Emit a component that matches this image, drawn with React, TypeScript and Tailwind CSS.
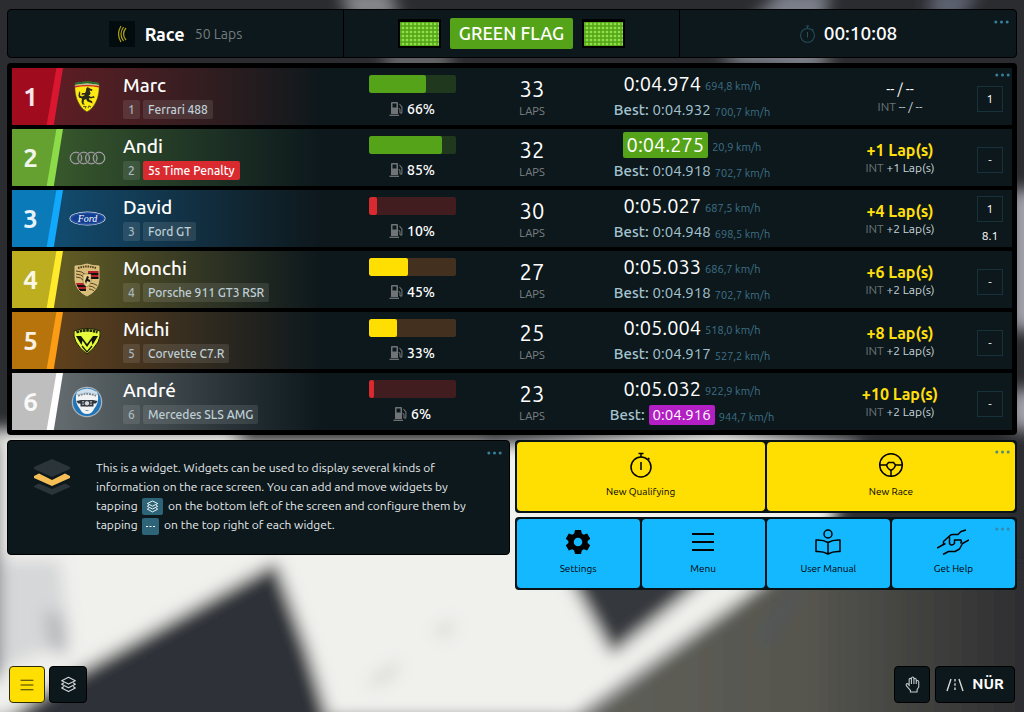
import React from 'react';
import clsx from 'clsx';

interface Driver {
  pos: number;
  name: string;
  tag: string;
  penalty?: boolean;
  fuel: number;
  laps: number;
  last: string;
  lastSpeed: string;
  lastFlag?: boolean;
  best: string;
  bestSpeed: string;
  bestFlag?: boolean;
  gap: string;
  int: string;
  box: string;
  boxTime?: string;
  row: string;
  rank: string;
  stripe: string;
  logo: React.ReactNode;
}

const Ferrari = () => (
  <svg viewBox="0 0 26 32" className="h-8 w-[26px]">
    <path d="M1 2Q13-1 25 2Q26 13 22 21Q19 28 13 31Q7 28 4 21Q0 13 1 2Z" fill="#fdea14" stroke="#39361b" strokeWidth=".6" />
    <path d="M1 2Q13-1 25 2V4Q13 1 1 4Z" fill="#236b35" />
    <path d="M1 4Q13 1 25 4V5Q13 3 1 5Z" fill="#b9b9a0" />
    <path d="M1 5Q13 3 25 5V6.500Q13 4 1 6.500Z" fill="#d2232a" />
    <path d="M13.500 6L16 7.500L18.500 8.500L18 10L15.500 9.500L16.500 12Q16.500 14 14.500 14.500L17 16L20 15L20.500 17L18.500 16.800L17.500 17.500L15 17L15.500 19L18 20L18.500 22.500L16.500 21.500L13.500 20.500L12 18L10 19L9.500 22L11 23.500L8.500 23.500L7.500 21L8 18L7 17Q4.500 17.500 4.500 14.500Q4.200 12 6 10Q6.500 12.500 6 14.500L8 15.500L11 14L9.500 13.500L7.500 14L8 12L11 12L12 10Q11.500 7.500 13.500 6Z" fill="#2c2a1a" />
    <path d="M9 25.500h3l-1 2M14 27l1-2 2 1" fill="none" stroke="#6b6216" strokeWidth="1.100" />
  </svg>
);

const Audi = () => (
  <svg viewBox="0 0 37 14" className="h-[14px] w-[37px]" fill="none">
    {[7, 14.7, 22.3, 30].map((cx) => (
      <g key={cx}>
        <circle cx={cx} cy="7" r="5.6" stroke="#595f58" strokeWidth="1.9" />
        <circle cx={cx} cy="7" r="5.8" stroke="#b4b8b5" strokeWidth=".8" />
      </g>
    ))}
  </svg>
);

const Ford = () => (
  <svg viewBox="0 0 37 15" className="h-[15px] w-[37px]">
    <ellipse cx="18.500" cy="7.500" rx="18" ry="7" fill="#d5dfec" />
    <ellipse cx="18.500" cy="7.500" rx="17.200" ry="6.300" fill="#123e92" />
    <ellipse cx="18.500" cy="7.500" rx="16" ry="5.400" fill="none" stroke="#5578b5" strokeWidth=".4" />
    <text x="18.500" y="10.500" textAnchor="middle" fontSize="10" fontStyle="italic" fontFamily="Liberation Serif, serif" fill="#fff">Ford</text>
  </svg>
);

const Porsche = () => (
  <svg viewBox="0 0 26 34" className="h-[34px] w-[26px]">
    <defs>
      <clipPath id="crest">
        <path d="M1 3Q7 3 13 1Q19 3 25 3V17Q24 28 13 33Q2 28 1 17Z" />
      </clipPath>
    </defs>
    <g clipPath="url(#crest)">
      <path d="M0 0H26V34H0Z" fill="#d8bd79" />
      <path d="M14 8h12v2H14zM14 12h12v2H14zM1 20h11v2H1zM2 24h10v2H2z" fill="#b5202f" />
      <path d="M14 10h12v2H14zM14 14h12v2H14zM1 22h11v2H1zM4 26h8v2H4z" fill="#16120d" />
      <path d="M2 8q6 0 10 4M2 11q5 0 9 4M2 14q5 0 7 3M15 20q5 0 9 3M15 23q4 0 7 3M15 26q3 0 5 2" stroke="#59431f" strokeWidth="1" fill="none" />
      <path d="M9 11h8v7q0 4-4 6q-4-2-4-6z" fill="#e6d08d" stroke="#7b6031" strokeWidth=".5" />
      <path d="M13 13l2 1-1 2 2 1v2l-3-1-1 3-1-3 1-2z" fill="#1a1610" />
    </g>
    <path d="M4 5Q13 2 22 5" stroke="#544220" strokeWidth="2" strokeDasharray="1.600 .8" fill="none" />
    <path d="M1 3Q7 3 13 1Q19 3 25 3V17Q24 28 13 33Q2 28 1 17Z" fill="none" stroke="#dfc687" strokeWidth=".9" />
  </svg>
);

const Mosler = () => (
  <svg viewBox="0 0 28 28" className="h-7 w-7">
    <path d="M1 4Q14-1 27 4Q28 9 25 15Q21 22 14 27Q7 22 3 15Q0 9 1 4Z" fill="#e4fa3a" stroke="#191f0c" strokeWidth="1" />
    <path d="M3.500 5.200Q14 1.500 24.500 5.200" stroke="#1c2207" strokeWidth="2.600" strokeDasharray="2.600 .7" fill="none" />
    <path d="M3 9L8 9L14 17L20 9L25 9L19.500 18L18.500 13.500L14 20L9.500 13.500L8.500 18Z" fill="#11150a" />
    <path d="M9 19L14 25L19 19" stroke="#11150a" strokeWidth="1.200" fill="none" />
  </svg>
);

const Mercedes = () => (
  <svg viewBox="0 0 32 32" className="h-8 w-8">
    <circle cx="16" cy="16" r="15.300" fill="#aab3ba" />
    <circle cx="16" cy="16" r="14" fill="#1f74b8" />
    <path d="M6 6Q16-1 26 6L27 9Q16 4 5 9Z" fill="#cfe0ee" />
    <path d="M5 9Q16 4 27 9Q28 17 23 23Q21 28 16 28Q11 28 9 23Q4 17 5 9Z" fill="#f1f3f4" />
    <path d="M7 9.800Q16 6 25 9.800" stroke="#7c8892" strokeWidth="1.800" strokeDasharray="2 .8" fill="none" />
    <path d="M5.500 15L10 14H22L26.500 15L25 17.500H22.500V20.500H9.500V17.500H7Z" fill="#30373c" />
    <path d="M11 15.500h2M11 17h2M11 18.500h2M19 15.500h2M19 17h2M19 18.500h2" stroke="#c9ced2" strokeWidth=".7" />
    <circle cx="16" cy="17.300" r="2.700" fill="#d4d8db" stroke="#30373c" />
    <path d="M14.500 24.500h3" stroke="#8b979f" />
  </svg>
);

const drivers: Driver[] = [
  { pos: 1, name: 'Marc', tag: 'Ferrari 488', fuel: 66, laps: 33, last: '0:04.974', lastSpeed: '694,8 km/h', best: '0:04.932', bestSpeed: '700,7 km/h', gap: '-- / --', int: '-- / --', box: '1', row: 'from-[#5c1d24]', rank: 'bg-[#a00c1d]', stripe: 'bg-[#da1730]', logo: <Ferrari /> },
  { pos: 2, name: 'Andi', tag: '5s Time Penalty', penalty: true, fuel: 85, laps: 32, last: '0:04.275', lastSpeed: '20,9 km/h', lastFlag: true, best: '0:04.918', bestSpeed: '702,7 km/h', gap: '+1 Lap(s)', int: '+1 Lap(s)', box: '-', row: 'from-[#36562b]', rank: 'bg-[#64a131]', stripe: 'bg-[#8bdc48]', logo: <Audi /> },
  { pos: 3, name: 'David', tag: 'Ford GT', fuel: 10, laps: 30, last: '0:05.027', lastSpeed: '687,5 km/h', best: '0:04.948', bestSpeed: '698,5 km/h', gap: '+4 Lap(s)', int: '+2 Lap(s)', box: '1', boxTime: '8.1', row: 'from-[#124a6d]', rank: 'bg-[#0b7ab8]', stripe: 'bg-[#12a8fb]', logo: <Ford /> },
  { pos: 4, name: 'Monchi', tag: 'Porsche 911 GT3 RSR', fuel: 45, laps: 27, last: '0:05.033', lastSpeed: '686,7 km/h', best: '0:04.918', bestSpeed: '702,7 km/h', gap: '+6 Lap(s)', int: '+2 Lap(s)', box: '-', row: 'from-[#615b23]', rank: 'bg-[#bcae1e]', stripe: 'bg-[#ffea2b]', logo: <Porsche /> },
  { pos: 5, name: 'Michi', tag: 'Corvette C7.R', fuel: 33, laps: 25, last: '0:05.004', lastSpeed: '518,0 km/h', best: '0:04.917', bestSpeed: '527,2 km/h', gap: '+8 Lap(s)', int: '+2 Lap(s)', box: '-', row: 'from-[#5e401c]', rank: 'bg-[#b8740c]', stripe: 'bg-[#fb9c15]', logo: <Mosler /> },
  { pos: 6, name: 'André', tag: 'Mercedes SLS AMG', fuel: 6, laps: 23, last: '0:05.032', lastSpeed: '922,9 km/h', best: '0:04.916', bestSpeed: '944,7 km/h', bestFlag: true, gap: '+10 Lap(s)', int: '+2 Lap(s)', box: '-', row: 'from-[#626a6d]', rank: 'bg-[#bebebe]', stripe: 'bg-white', logo: <Mercedes /> },
];

const fuelColors = (fuel: number) => {
  if (fuel > 50) return { bar: 'bg-[#54a318]', track: 'bg-[#20381d]' };
  if (fuel > 20) return { bar: 'bg-[#ffde02]', track: 'bg-[#43301f]' };
  return { bar: 'bg-[#d92b2f]', track: 'bg-[#421d20]' };
};

const Stopwatch = ({ className }: { className: string }) => (
  <svg viewBox="0 0 24 26" className={className} fill="none" stroke="currentColor" strokeWidth="1.500">
    <circle cx="12" cy="15" r="10" />
    <path d="M12 10v8M9.500 1.500h5M12 1.500V5M19 6l1.500 1.500" />
  </svg>
);

const Layers = ({ className }: { className: string }) => (
  <svg viewBox="0 0 20 20" className={className} fill="none" stroke="currentColor" strokeWidth="1.400" strokeLinejoin="round">
    <path d="M10 1.500L18 5.500L10 9.500L2 5.500Z" />
    <path d="M4.500 8L2 9.800L10 13.800L18 9.800L15.500 8" />
    <path d="M4.500 12.300L2 14.100L10 18.300L18 14.100L15.500 12.300" />
  </svg>
);

const Bars = ({ className }: { className: string }) => (
  <svg viewBox="0 0 24 20" className={className} fill="none" stroke="currentColor" strokeWidth="1.800">
    <path d="M1 2h22M1 10h22M1 18h22" />
  </svg>
);

const FuelPump = () => (
  <svg viewBox="0 0 14 14" className="h-[14px] w-[14px] text-[#707476]">
    <path fillRule="evenodd" d="M2 1Q2 0 3 0H8Q9 0 9 1V12H2ZM3.500 1.500V5.500H7.500V1.500Z" fill="currentColor" />
    <path d="M.5 13.300H10" stroke="currentColor" strokeWidth="1.300" />
    <path d="M9.500 6.500Q11 6.500 11 8V10.500Q12.900 12 12.900 10V5L10.500 2" stroke="currentColor" fill="none" strokeWidth="1.100" />
  </svg>
);

const Wheel = () => (
  <svg viewBox="0 0 26 26" className="h-[26px] w-[26px]" fill="none" stroke="currentColor" strokeWidth="1.500">
    <circle cx="13" cy="13" r="11.300" />
    <path d="M2 13H8.500L10.500 10.500H15.500L17.500 13H24M8.500 13Q9 16 13 18.500Q17 16 17.500 13M13 18.500V24" />
  </svg>
);

const Gear = () => (
  <svg viewBox="0 0 26 26" className="h-[26px] w-[26px] text-black" fill="currentColor">
    <path fillRule="evenodd" d="M10 1h6l.8 3.600 2 1.100 3.400-1.100 3 5.200-2.600 2.300v1.800l2.600 2.300-3 5.200-3.400-1.100-2 1.100L16 25h-6l-.8-3.600-2-1.100-3.400 1.100-3-5.200 2.600-2.300v-1.800L.8 9.800l3-5.200 3.400 1.100 2-1.100ZM13 8.700a4.300 4.300 0 1 0 0 8.600a4.300 4.300 0 1 0 0-8.600Z" />
  </svg>
);

const Reader = () => (
  <svg viewBox="0 0 26 26" className="h-[26px] w-[26px]" fill="none" stroke="currentColor" strokeWidth="1.500" strokeLinejoin="round">
    <circle cx="13" cy="5" r="4" />
    <path d="M13 13.500Q8 10.500 1 11V22.500Q8 22 13 25Q18 22 25 22.500V11Q18 10.500 13 13.500ZM13 13.500V25" />
  </svg>
);

const Hands = () => (
  <svg viewBox="0 0 32 26" className="h-[26px] w-8" fill="none" stroke="currentColor" strokeWidth="1.500" strokeLinejoin="round">
    <path d="M0 19L6.500 15.500V12.500L13 6.500Q14 5.500 16 5.500H21L24 2.500L29 1" />
    <path d="M6 25.500L11.500 22.500H18L22.500 20L25.500 14.500L32 11" />
    <path d="M12.500 7.500V14.500Q14.500 17.500 17.500 14.500V11H24Q25 12.500 23.500 14.500M6.500 15.500L8.500 14.500" />
  </svg>
);

const Hand = () => (
  <svg viewBox="0 0 18 20" className="h-[17px] w-[15px] text-[#c5c9cb]" fill="none" stroke="currentColor" strokeWidth="1.300" strokeLinejoin="round">
    <path d="M5 12V4Q5 2.600 6.400 2.600Q7.700 2.600 7.700 4V2.300Q8 1 9.300 1Q10.600 1 10.700 2.300V4Q11 2.600 12.300 2.700Q13.500 2.900 13.500 4.200V6Q14 5 15.200 5.200Q16.500 5.500 16.500 7V13L14.500 16V19H6.500V17L2 12Q.8 10 2 9Q3.500 8.500 5 11M7.700 4V9.500M10.700 4V9.500M13.500 6V9.500" />
  </svg>
);

const Road = () => (
  <svg viewBox="0 0 18 14" className="h-[14px] w-[18px] text-[#d3d6d7]" fill="none" stroke="currentColor" strokeWidth="1.400">
    <path d="M5 1L1 13M13 1L17 13" />
    <path d="M9 1V13" strokeDasharray="2.500 1.800" />
  </svg>
);

const Dots = ({ label, color = 'text-[#36809b]' }: { label: string; color?: string }) => (
  <button type="button" aria-label={label} className={clsx('absolute right-[7px] top-2 flex h-2 w-[15px] items-center', color)}>
    <svg viewBox="0 0 15 4" className="h-1 w-[15px]" fill="currentColor">
      <circle cx="1.800" cy="2" r="1.500" />
      <circle cx="7.500" cy="2" r="1.500" />
      <circle cx="13.200" cy="2" r="1.500" />
    </svg>
  </button>
);

const FlagPanel = () => (
  <svg viewBox="0 0 43 29" className="h-[29px] w-[43px]">
    <defs>
      <pattern id="led" width="4" height="4" x="3" y="3" patternUnits="userSpaceOnUse">
        <rect width="4" height="4" fill="#56a81b" />
        <circle cx="2" cy="2" r="1.350" fill="#93e04b" />
      </pattern>
    </defs>
    <rect width="43" height="29" rx="1" fill="#000" />
    <rect x="2" y="3" width="39" height="24" fill="url(#led)" />
  </svg>
);

const Backdrop = () => (
  <svg viewBox="0 0 1024 712" preserveAspectRatio="xMidYMid slice" className="absolute inset-0 h-full w-full" aria-hidden="true">
    <defs>
      <filter id="soft" x="-10%" y="-10%" width="120%" height="120%">
        <feGaussianBlur stdDeviation="8" />
      </filter>
      <linearGradient id="tarmac" x1="0" y1="0" x2="1" y2="0">
        <stop offset="0" stopColor="#5f6059" />
        <stop offset=".5" stopColor="#56564f" />
        <stop offset="1" stopColor="#2b2b2e" />
      </linearGradient>
    </defs>
    <rect width="1024" height="712" fill="#2b2c30" />
    <g filter="url(#soft)">
      <path d="M340-10H390L400 20L350 20Z" fill="#88898c" />
      <path d="M385 56H450V66H385ZM740 56H830V66H740Z" fill="#9b9c9e" />
      <path d="M780-10H830L815 75L720 60Z" fill="#7c808a" />
      <path d="M930-10H980L960 20H930Z" fill="#5e6472" />
      <path d="M1010 190H1040V330H1010Z" fill="#a5a4ae" />
      <path d="M1010 390H1040V430H1010Z" fill="#a5a4ae" />
      <path d="M-20 430H230L250 445H480L720 430L860 445L830 530L740 600L575 720H-20Z" fill="#f0f0ed" />
      <path d="M240 430H480V446H240Z" fill="#232328" />
      <path d="M276 562L60 682L-10 730H332L308 650Z" fill="#2e3037" />
      <path d="M560 560H730L612 655Z" fill="#36383e" />
      <path d="M780 570H1040V730H570Z" fill="url(#tarmac)" />
      <path d="M0 560H60L70 640L0 670Z" fill="#d6d7d8" />
      <path d="M45 610L62 615L68 655L50 650Z" fill="#b4b6ba" />
      <path d="M370 680L400 660L395 675L370 688ZM432 632L455 618L447 638Z" fill="#d2d3cf" />
      <path d="M760 640L795 585L803 585L768 645Z" fill="#50565c" />
      <path d="M-20 440H0V680H-20Z" fill="#77777f" />
    </g>
  </svg>
);

const DriverRow: React.FC<{ driver: Driver }> = ({ driver }) => {
  const colors = fuelColors(driver.fuel);

  return (
    <tr className={clsx('h-[57px] bg-linear-to-r from-5% to-[#0d181c] to-31%', driver.row)}>
      <td className="p-0">
        <div className="relative h-[57px] w-[51px]">
          <div className={clsx('absolute inset-0 [clip-path:polygon(0_0,88%_0,70%_100%,0_100%)]', driver.rank)} />
          <div className={clsx('absolute inset-0 [clip-path:polygon(87%_0,100%_0,82%_100%,68%_100%)]', driver.stripe)} />
          <span className="relative flex h-full w-[37px] items-center justify-center text-[26px] font-semibold text-white/90">{driver.pos}</span>
        </div>
      </td>
      <td className="p-0">
        <div className="flex justify-center">{driver.logo}</div>
      </td>
      <td className="p-0 pb-0.5 pl-3">
        <div className="text-[19px] leading-6 font-medium text-white">{driver.name}</div>
        <div className="mt-[3px] flex gap-[3px] text-xs leading-[19px] font-medium whitespace-nowrap">
          <span className="w-[17px] rounded-xs bg-white/10 text-center text-[#a9b8bd]">{driver.pos}</span>
          <span className={clsx('rounded-xs px-[5px]', driver.penalty ? 'bg-[#d92b2f] text-white' : 'bg-white/10 text-[#bfd0d7]')}>{driver.tag}</span>
        </div>
      </td>
      <td className="p-0 pb-0.5">
        <div className={clsx('mx-auto h-[18px] w-[87px] overflow-hidden rounded-xs', colors.track)}>
          <div className={clsx('h-full rounded-xs', colors.bar)} style={{ width: `${driver.fuel}%` }} />
        </div>
        <div className="mt-2 flex items-center justify-center gap-1 text-sm leading-4 font-medium text-white">
          <FuelPump />
          {driver.fuel}%
        </div>
      </td>
      <td className="p-0 text-center">
        <div className="pt-1 text-[22px] leading-6 text-white">{driver.laps}</div>
        <div className="text-[11px] leading-5 text-[#80868a]">LAPS</div>
      </td>
      <td className="p-0 pb-0.5 text-center whitespace-nowrap">
        <div className="flex items-center justify-center gap-1">
          <span className={clsx('text-xl leading-[26px] text-white', driver.lastFlag && 'rounded-xs bg-[#54a318] px-1')}>{driver.last}</span>
          <span className="pt-1 text-[11px] leading-4 text-[#3d7288]">{driver.lastSpeed}</span>
        </div>
        <div className="mt-[3px] flex items-center justify-center gap-1 text-[15px] leading-5 text-[#a4c4d1]">
          <span className="font-medium">Best:</span>
          <span className={clsx(driver.bestFlag && 'rounded-xs bg-[#b31fc4] px-1 text-white')}>{driver.best}</span>
          <span className="pt-1 text-[11px] leading-4 text-[#3d7288]">{driver.bestSpeed}</span>
        </div>
      </td>
      <td className="p-0 pl-[30px] text-center">
        <div className={clsx('leading-5', driver.pos === 1 ? 'text-sm leading-5 text-white' : 'text-base leading-5 font-semibold text-[#ffdf0c]')}>{driver.gap}</div>
        <div className="text-xs leading-4 text-[#c5d4da]">
          <span className="text-[#697377]">INT</span> {driver.int}
        </div>
      </td>
      <td className="p-0 pt-1 text-center text-xs text-white">
        <div className="mx-auto flex h-[26px] w-[26px] items-center justify-center border border-[#17323b]">{driver.box}</div>
        {driver.boxTime && <div className="pt-1 leading-5">{driver.boxTime}</div>}
      </td>
    </tr>
  );
};

interface TileProps {
  label: string;
  color: string;
  children: React.ReactNode;
}

const Tile: React.FC<TileProps> = ({ label, color, children }) => (
  <button type="button" className={clsx('flex h-[69px] flex-1 flex-col items-center justify-center gap-1 rounded-sm text-[10px] leading-5 text-black', color)}>
    {children}
    {label}
  </button>
);

const App: React.FC = () => (
  <div className="relative flex min-h-screen flex-col justify-between overflow-hidden px-[7px] py-[9px] font-['Ubuntu','Noto_Sans',sans-serif]">
    <Backdrop />

    <main className="relative flex flex-col gap-[5px]">
      <header className="relative grid h-[49px] grid-cols-3 rounded-sm border border-black bg-[#0d181c] text-white">
        <div className="flex items-center justify-center border-r border-black">
          <svg viewBox="0 0 26 26" className="mr-2.5 h-[26px] w-[26px] bg-[#020c0e]" fill="none" stroke="#b0a112" strokeWidth="1.200">
            <path d="M12 5Q7 13 12 21M14.500 6Q9.500 13 14.500 20M17 7Q12 13 17 19" />
          </svg>
          <h1 className="text-lg font-semibold">Race</h1>
          <span className="ml-2.5 text-sm text-[#737b7e]">50 Laps</span>
        </div>
        <div className="flex items-center justify-center gap-[9px] border-r border-black">
          <FlagPanel />
          <span className="rounded-xs bg-[#54a318] px-[9px] text-lg leading-[31px] font-medium">GREEN FLAG</span>
          <FlagPanel />
        </div>
        <div className="flex items-center justify-center gap-2 text-[19px] font-medium">
          <Stopwatch className="h-[18px] w-[17px] text-[#24505f]" />
          00:10:08
        </div>
        <Dots label="Configure race status" />
      </header>

      <section className="relative rounded-sm bg-black px-[5px] py-px">
        <table className="w-full table-fixed border-separate border-spacing-x-0 border-spacing-y-1">
          <colgroup>
            <col className="w-[5.1%]" />
            <col className="w-[4.8%]" />
            <col className="w-[23.1%]" />
            <col className="w-[14%]" />
            <col className="w-[10%]" />
            <col className="w-[22%]" />
            <col className="w-[16.6%]" />
            <col className="w-[4.4%]" />
          </colgroup>
          <tbody>
            {drivers.map((driver) => (
              <DriverRow key={driver.pos} driver={driver} />
            ))}
          </tbody>
        </table>
        <Dots label="Configure standings" />
      </section>

      <div className="grid grid-cols-2 items-start gap-[5px]">
        <section className="relative flex h-[115px] rounded-sm border border-black bg-[#0d181c] pt-[17px]">
          <svg viewBox="0 0 38 38" className="ml-[25px] h-[38px] w-[38px] shrink-0">
            <path d="M1 9L19 1L37 9V11L19 19L1 11ZM1 28L6 25.500L19 31L32 25.500L37 28V29L19 37L1 29Z" fill="#2b3438" />
            <path d="M1 18L6 15.500L19 22L32 15.500L37 18V20L19 28L1 20Z" fill="#f4bd56" />
          </svg>
          <p className="ml-[25px] text-xs leading-[19px] whitespace-nowrap text-[#e6eaeb]">
            This is a widget. Widgets can be used to display several kinds of
            <br />
            information on the race screen. You can add and move widgets by
            <br />
            tapping{' '}
            <span className="mx-0.5 inline-flex h-[17px] w-[21px] items-center justify-center rounded-xs bg-[#2d6478] align-middle text-white">
              <Layers className="h-[13px] w-[15px]" />
            </span>{' '}
            on the bottom left of the screen and configure them by
            <br />
            tapping{' '}
            <span className="mx-0.5 inline-flex h-[17px] w-[17px] items-center justify-center rounded-xs bg-[#2d6478] align-middle text-white">
              <svg viewBox="0 0 9 3" className="h-[3px] w-[9px]" fill="currentColor">
                <path d="M0 1h2v1H0zM3.500 1h2v1h-2zM7 1h2v1H7z" />
              </svg>
            </span>{' '}
            on the top right of each widget.
          </p>
          <Dots label="Configure help widget" />
        </section>

        <div className="flex flex-col gap-1">
          <section className="relative flex gap-0.5 rounded-sm bg-[#071317] p-0.5">
            <Tile label="New Qualifying" color="bg-[#ffde02]">
              <Stopwatch className="h-[26px] w-6" />
            </Tile>
            <Tile label="New Race" color="bg-[#ffde02]">
              <Wheel />
            </Tile>
            <Dots label="Configure race buttons" color="text-[#4d8a78]" />
          </section>
          <section className="relative flex gap-0.5 rounded-sm bg-[#071317] p-0.5">
            <Tile label="Settings" color="bg-[#13b8ff]">
              <Gear />
            </Tile>
            <Tile label="Menu" color="bg-[#13b8ff]">
              <Bars className="h-[26px] w-6" />
            </Tile>
            <Tile label="User Manual" color="bg-[#13b8ff]">
              <Reader />
            </Tile>
            <Tile label="Get Help" color="bg-[#13b8ff]">
              <Hands />
            </Tile>
            <Dots label="Configure menu buttons" color="text-[#3488ad]" />
          </section>
        </div>
      </div>
    </main>

    <footer className="relative flex h-[37px] justify-between px-0.5">
      <div className="flex gap-1">
        <button type="button" aria-label="Menu" className="flex w-9 items-center justify-center rounded-sm border border-[#2e2a08] bg-[#ffde02] text-[#3d3807]">
          <Bars className="h-3 w-[14px]" />
        </button>
        <button type="button" aria-label="Widgets" className="flex w-[38px] items-center justify-center rounded-sm border border-black bg-[#0d181c] text-[#d3d6d7]">
          <Layers className="h-[17px] w-[17px]" />
        </button>
      </div>
      <div className="flex gap-[5px]">
        <button type="button" aria-label="Pause" className="flex w-9 items-center justify-center rounded-sm border border-black bg-[#0d181c]">
          <Hand />
        </button>
        <button type="button" className="flex w-20 items-center justify-center gap-2 rounded-sm border border-black bg-[#0d181c] text-[15px] font-semibold text-white">
          <Road />
          NÜR
        </button>
      </div>
    </footer>
  </div>
);

export default App;
